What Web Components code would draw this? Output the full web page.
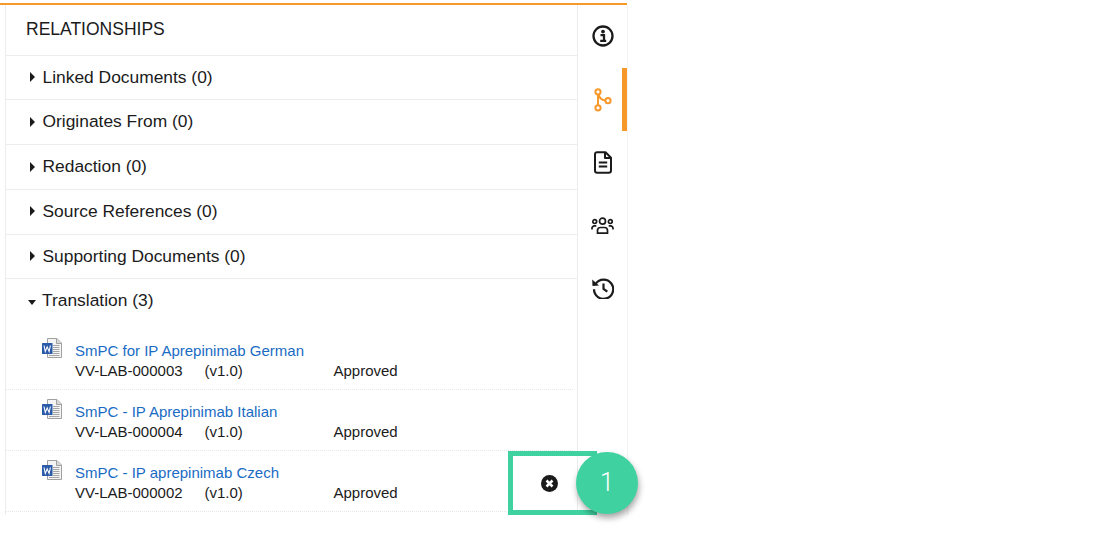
<!DOCTYPE html>
<html>
<head>
<meta charset="utf-8">
<title>Relationships</title>
<style>
  html, body { margin: 0; background: #fff; }
  body { min-height: 535px; font-family: "Liberation Sans", Arial, sans-serif; color: #1b1b1b; }
</style>
</head>
<body>
<doc-panel>
  <rel-section label="Linked Documents (0)"></rel-section>
  <rel-section label="Originates From (0)"></rel-section>
  <rel-section label="Redaction (0)"></rel-section>
  <rel-section label="Source References (0)"></rel-section>
  <rel-section label="Supporting Documents (0)"></rel-section>
  <rel-section label="Translation (3)" open>
    <rel-doc name="SmPC for IP Aprepinimab German" number="VV-LAB-000003"></rel-doc>
    <rel-doc name="SmPC - IP Aprepinimab Italian" number="VV-LAB-000004"></rel-doc>
    <rel-doc name="SmPC - IP aprepinimab Czech" number="VV-LAB-000002" removable></rel-doc>
  </rel-section>
</doc-panel>

<script>
class SideNav extends HTMLElement {
    constructor() {
        super();
        this.attachShadow({mode: "open"}).innerHTML = `
          <style>
            :host { display: block; width: 49px; flex: none; border-right: 1px solid #f3f3f3; }
            .tab { height: 63px; display: flex; align-items: center; justify-content: center; box-sizing: border-box; color: #1b1b1b; }
            .tab.active { color: #f7982a; border-right: 5px solid #f7982a; padding-left: 6px; }
            svg { display: block; fill: none; stroke: currentColor; }
            .up { margin-bottom: 2px; }
          </style>
          <div class="tab">
            <svg class="up" width="22" height="22" viewBox="0 0 22 22" stroke-width="2.300">
              <circle cx="11" cy="11" r="9.500"/>
              <circle cx="11" cy="6.600" r="1.900" fill="currentColor" stroke="none"/>
              <path d="M8.500 10.100h3.500v5.200M8.200 15.800h6"/>
            </svg>
          </div>
          <div class="tab active">
            <svg width="20" height="24" viewBox="0 0 20 24" stroke-width="2">
              <circle cx="5" cy="3.800" r="2.600"/>
              <circle cx="5" cy="19.800" r="2.600"/>
              <circle cx="15" cy="12.700" r="2.600"/>
              <path d="M5 6.400V17.200M5.800 6.800C6.500 10 9 12.100 12.400 12.500"/>
            </svg>
          </div>
          <div class="tab">
            <svg width="18" height="23" viewBox="0 0 18 23" stroke-width="2" stroke-linejoin="round">
              <path d="M3 1.200h8.500L17 6.700V19.500a2.200 2.200 0 0 1-2.200 2.200H3.200A2.200 2.200 0 0 1 1 19.500V3.200a2 2 0 0 1 2-2z"/>
              <path d="M11 1.500V7h5.500M4.800 11.500h8.400M4.800 15.500h8.400"/>
            </svg>
          </div>
          <div class="tab">
            <svg width="23" height="18" viewBox="0 0 23 18" stroke-width="1.700">
              <circle cx="11.500" cy="4.200" r="3"/>
              <circle cx="3.700" cy="4.600" r="1.900"/>
              <circle cx="19.300" cy="4.600" r="1.900"/>
              <path d="M6.500 16.200v-2.700a3 3 0 0 1 3-3h4a3 3 0 0 1 3 3v2.700z"/>
              <path d="M1 12.500v-1.200a2.500 2.500 0 0 1 2.500-2.500h1.800M22 12.500v-1.200a2.500 2.500 0 0 0-2.500-2.500h-1.800"/>
            </svg>
          </div>
          <div class="tab">
            <svg class="up" width="23" height="22" viewBox="0 0 23 22" stroke-width="2.200">
              <path d="M4.700 6.800A9.600 9.600 0 1 1 3 12.200"/>
              <path d="M1.200 2.400 1.500 8.900 8 8.500z" fill="currentColor" stroke="none"/>
              <path d="M12.500 6.500v5.400l3.800 2.800"/>
            </svg>
          </div>
        `;
    }
}

class RelDoc extends HTMLElement {
    constructor() {
        super();
        this.attachShadow({mode: "open"});
    }

    connectedCallback() {
        const removable = this.hasAttribute("removable") ? `
          <svg class="remove" width="17" height="17" viewBox="0 0 17 17">
            <circle cx="8.500" cy="8.500" r="8.500" fill="#1b1b1b"/>
            <path d="M5.500 5.500l6 6M11.500 5.500l-6 6" stroke="#fff" stroke-width="2.500"/>
          </svg>
          <div class="callout"></div>
          <div class="badge">1</div>` : "";
        this.shadowRoot.innerHTML = `
          <style>
            :host { display: block; position: relative; height: 61px; box-sizing: border-box; margin-right: 4px; padding: 0 0 0 36px; border-bottom: 1px dotted #e6e6e6; }
            .row { display: flex; gap: 13px; padding-top: 12px; }
            .icon { flex: none; width: 20px; height: 20px; margin-top: -3px; }
            .name { display: block; font-size: 15px; line-height: 20px; color: #1a6bc4; }
            .meta { display: flex; font-size: 15px; line-height: 20px; color: #1b1b1b; white-space: nowrap; }
            .number { width: 129.500px; }
            .version { width: 129px; }
            .remove { position: absolute; right: 15px; top: 24px; }
            .callout { position: absolute; left: 502px; top: 0; width: 89px; height: 64px; box-sizing: border-box; border: 5px solid #3fd2a0; }
            .badge { position: absolute; left: 570px; top: 1px; width: 62px; height: 62px; border-radius: 50%; background: #3fd2a0; color: #fff; font: 300 25px/62px Roboto, "Liberation Sans", sans-serif; text-align: center; box-shadow: 1px 4px 6px rgba(0,0,0,.35); }
          </style>
          <div class="row">
            <svg class="icon" viewBox="0 0 20 20">
              <path d="M5.500 .5h9.500l4.500 4.500v14.500h-14z" fill="#f4f4f4" stroke="#a0a0a0"/>
              <path d="M14.500 .5v5h5" fill="#d8d8d8" stroke="#a0a0a0"/>
              <path d="M11 7.500h6.500M11 9.500h6.500M11 11.500h6.500M11 13.500h6.500M11 15.500h6.500M7 17.500h10.500" stroke="#a6a6a6"/>
              <rect x="0" y="5" width="10.500" height="11" rx=".5" fill="#2a5aa8"/>
              <path d="M2 7.500l1.300 6 1.900-4.600 1.900 4.600 1.300-6" fill="none" stroke="#fff" stroke-width="1.100"/>
            </svg>
            <div>
              <span class="name">${this.getAttribute("name")}</span>
              <div class="meta"><span class="number">${this.getAttribute("number")}</span><span class="version">(v1.0)</span><span>Approved</span></div>
            </div>
          </div>
          ${removable}
        `;
    }
}

class RelSection extends HTMLElement {
    constructor() {
        super();
        this.attachShadow({mode: "open"});
    }

    connectedCallback() {
        const open = this.hasAttribute("open");
        this.shadowRoot.innerHTML = `
          <style>
            :host { display: block; border-top: 1px solid #ececec; }
            .head { display: flex; align-items: center; box-sizing: border-box; height: 43.750px; padding: 0 0 .5px 22px; font-size: 17.400px; color: #1b1b1b; }
            .arrow { width: 0; height: 0; border-style: solid; }
            .arrow.closed { border-width: 5px 0 5px 5px; border-color: transparent transparent transparent #1b1b1b; margin-left: 2px; margin-right: 7.500px; }
            .arrow.opened { border-width: 5px 4.500px 0 4.500px; border-color: #1b1b1b transparent transparent transparent; margin-right: 6px; margin-top: 3px; }
            .body { padding-top: 6px; }
          </style>
          <div class="head"><span class="arrow ${open ? "opened" : "closed"}"></span>${this.getAttribute("label")}</div>
          ${open ? '<div class="body"><slot></slot></div>' : ""}
        `;
    }
}

class DocPanel extends HTMLElement {
    constructor() {
        super();
        this.attachShadow({mode: "open"}).innerHTML = `
          <style>
            :host { display: flex; width: 627px; margin-top: 3px; border-top: 2px solid #f7982a; box-sizing: border-box; }
            .main { width: 573px; margin-left: 5px; flex: none; box-sizing: border-box; height: 510px; border-left: 1px solid #ececec; border-right: 1px solid #ececec; }
            h2 { margin: 0; height: 49.500px; display: flex; align-items: center; padding-left: 20px; font-size: 17.500px; font-weight: 400; color: #1b1b1b; }
          </style>
          <div class="main">
            <h2>RELATIONSHIPS</h2>
            <slot></slot>
          </div>
          <side-nav></side-nav>
        `;
    }
}

customElements.define("side-nav", SideNav);
customElements.define("rel-doc", RelDoc);
customElements.define("rel-section", RelSection);
customElements.define("doc-panel", DocPanel);
</script>
</body>
</html>
